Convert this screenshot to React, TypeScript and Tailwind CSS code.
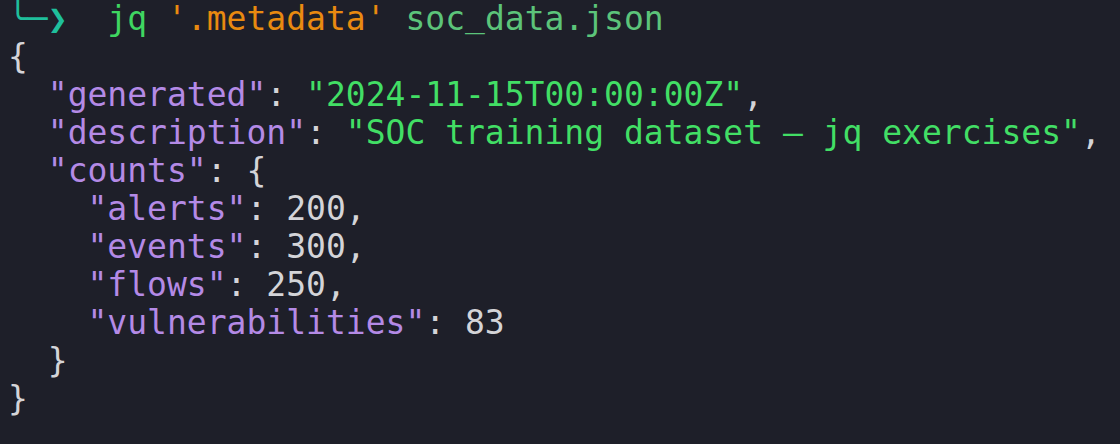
const K = "text-[#b48ae6]";
const S = "text-[#42de65]";
const P = "text-[#d4d4d8]";

function Key({ k }: { k: string }) {
  return <span className={K}>"{k}"</span>;
}

export default function App() {
  return (
    <div className="h-[444px] w-[1120px] overflow-hidden bg-[#1e1f29]">
      <pre className="pl-2 font-['DejaVu_Sans_Mono',monospace] text-[33px] leading-[38px] text-[#d4d4d8]">
        <div>
          <span className="text-[#1fbf9c]">╰─❯</span>
          {"  "}
          <span className="text-[#3fd661]">jq</span>{" "}
          <span className="text-[#e98a10]">'.metadata'</span>{" "}
          <span className="text-[#5cc47a]">
            soc<span className="relative -top-[4px]">_</span>data.json
          </span>
        </div>
        <div className={P}>{"{"}</div>
        <div>
          {"  "}
          <Key k="generated" />
          <span className={P}>: </span>
          <span className={S}>"2024-11-15T00:00:00Z"</span>
          <span className={P}>,</span>
        </div>
        <div>
          {"  "}
          <Key k="description" />
          <span className={P}>: </span>
          <span className={S}>"SOC training dataset — jq exercises"</span>
          <span className={P}>,</span>
        </div>
        <div>
          {"  "}
          <Key k="counts" />
          <span className={P}>: {"{"}</span>
        </div>
        <div>
          {"    "}
          <Key k="alerts" />
          <span className={P}>: 200,</span>
        </div>
        <div>
          {"    "}
          <Key k="events" />
          <span className={P}>: 300,</span>
        </div>
        <div>
          {"    "}
          <Key k="flows" />
          <span className={P}>: 250,</span>
        </div>
        <div>
          {"    "}
          <Key k="vulnerabilities" />
          <span className={P}>: 83</span>
        </div>
        <div className={P}>{"  }"}</div>
        <div className={P}>{"}"}</div>
      </pre>
    </div>
  );
}
